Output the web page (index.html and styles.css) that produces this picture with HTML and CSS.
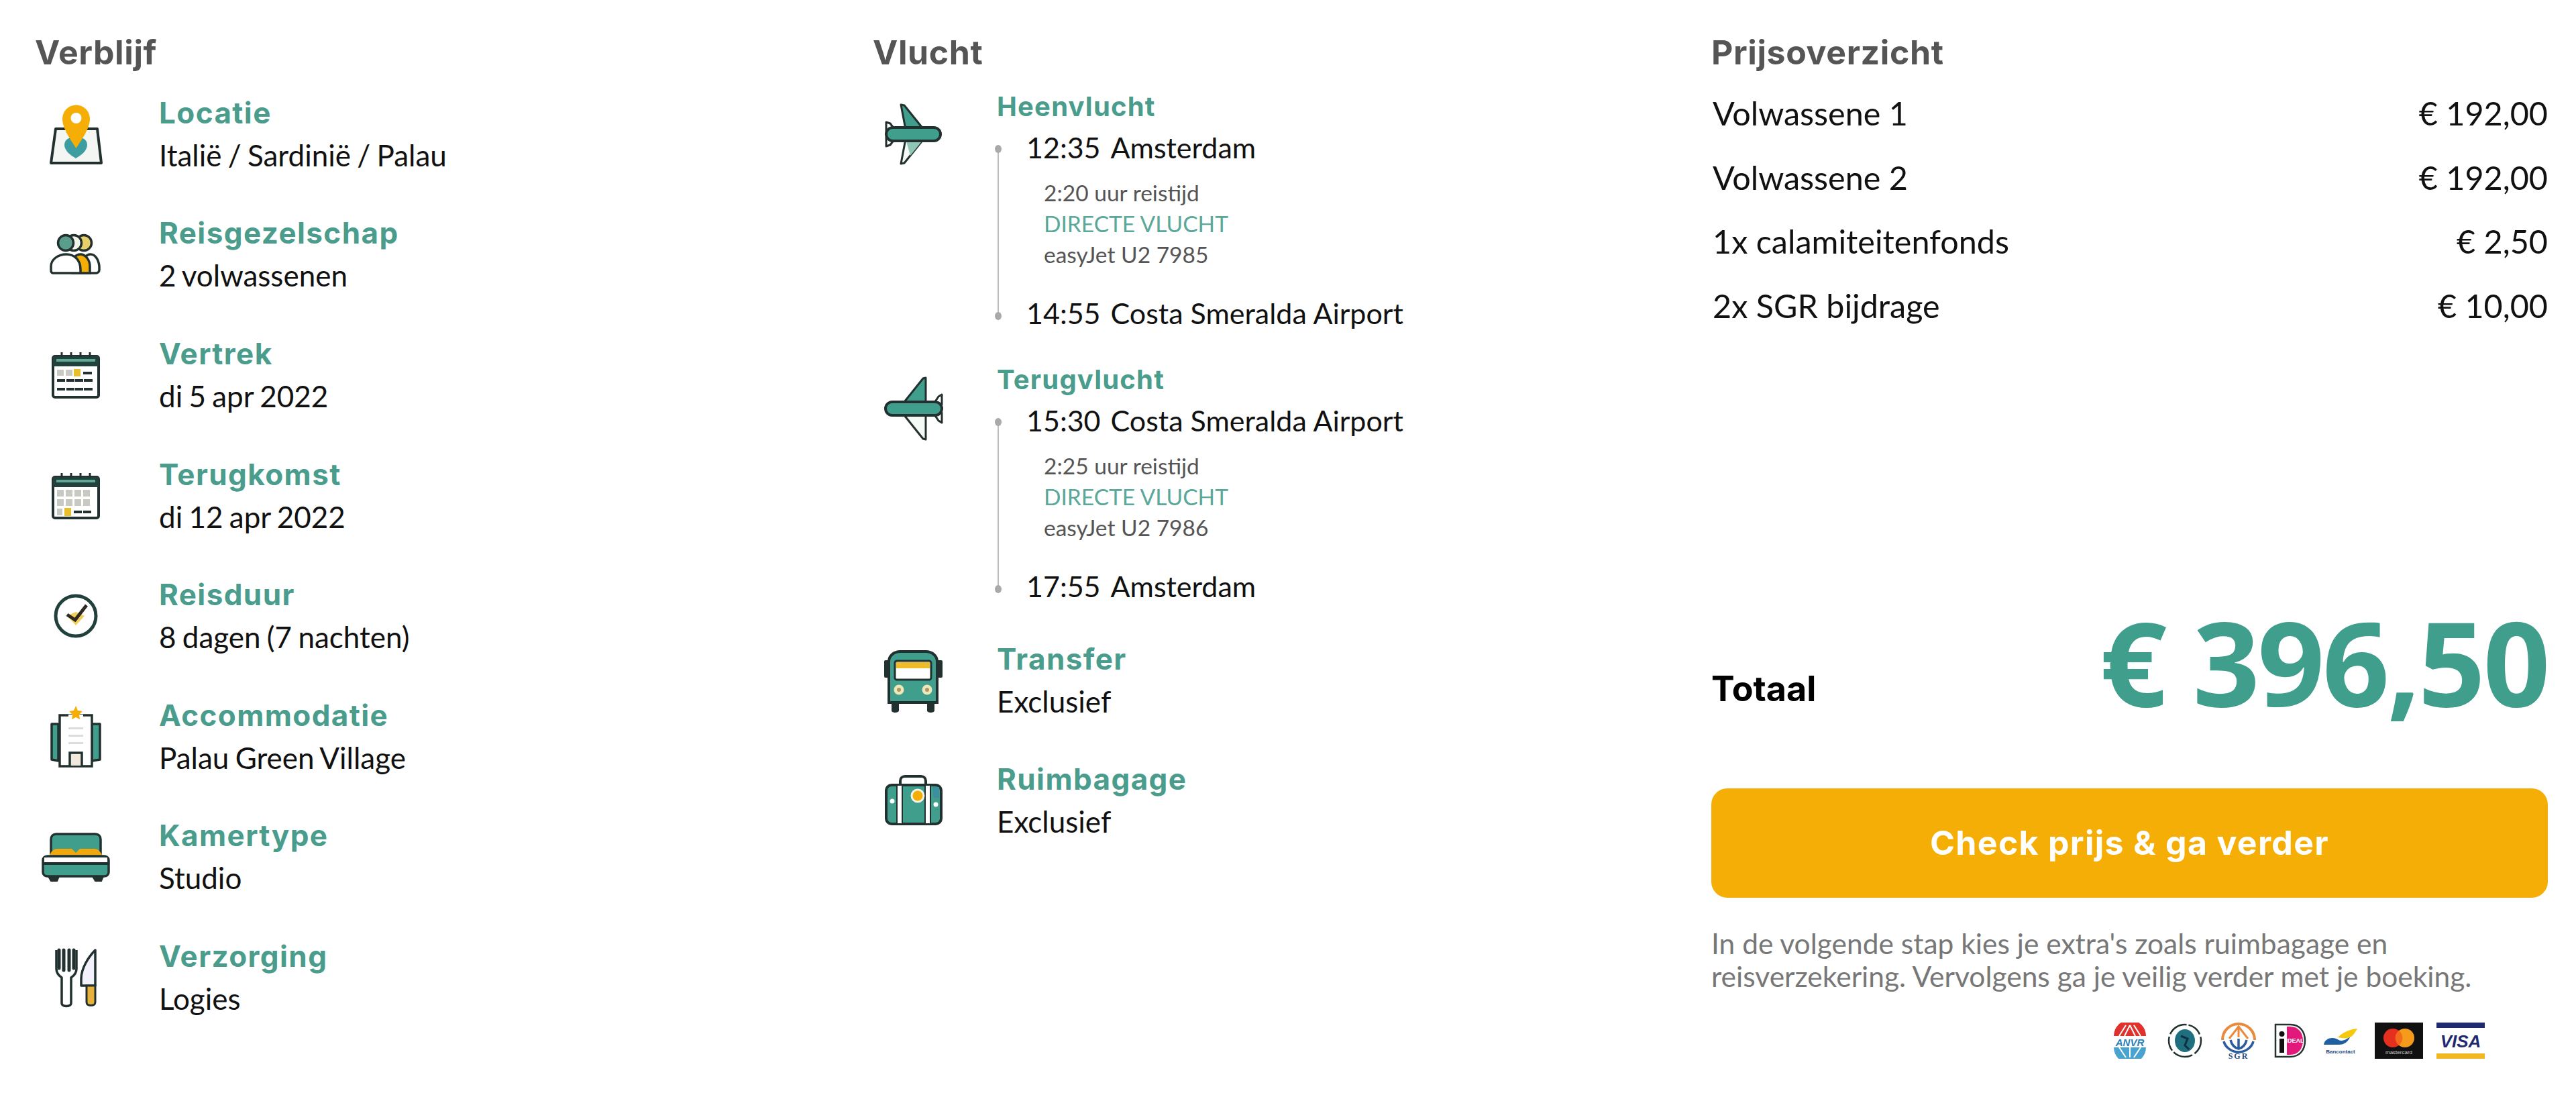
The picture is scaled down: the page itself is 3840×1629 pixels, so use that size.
FILE: index.html
```html
<!DOCTYPE html>
<html lang="nl">
<head>
<meta charset="utf-8">
<title>Boekingsoverzicht</title>
<link rel="stylesheet" href="styles.css">
</head>
<body>
<main class="page">

<section class="col">
  <h2 class="heading">Verblijf</h2>
  <div class="stack">
    <div class="item">
      <svg class="icon" viewBox="0 0 120 120"><path d="M31 52h62l6 51H24z" fill="#f4f6f4" stroke="#22302f" stroke-width="4" stroke-linejoin="round"/><path d="M44 76c0-8 7-12 17-12s17 4 17 12c0 9-10 16-17 20-7-4-17-11-17-20z" fill="#3d9da0"/><path d="M61.500 81C54 69 41 52 41 37a20.500 20.500 0 0 1 41 0c0 15-13 32-20.500 44z" fill="#f4ae05"/><circle cx="61.500" cy="36" r="8" fill="#fff"/></svg>
      <div><h3 class="label">Locatie</h3><p class="value">Italië / Sardinië / Palau</p></div>
    </div>
    <div class="item">
      <svg class="icon" viewBox="0 0 120 120"><g fill="#fff" stroke="#22302f" stroke-width="3.500"><ellipse cx="73" cy="43" rx="11.500" ry="11.500" fill="#e8cf6a"/><ellipse cx="58" cy="43" rx="11.500" ry="11.500" fill="#f3f3ea"/><ellipse cx="46" cy="43" rx="11.500" ry="11.500" fill="#5b9d8c"/><path d="M70 88V78c0-10 6-18 13-18s12 8 13 18v5c0 3-2 5-5 5z"/><path d="M56 88V74c0-8 5-14 12-14s14 8 14 18v10z" fill="#f4ae05"/><path d="M27 88c-2 0-3-2-3-5v-5c0-10 10-18 23-18 6 0 11 2 15 6 4 4 6 10 6 17v5z"/></g></svg>
      <div><h3 class="label">Reisgezelschap</h3><p class="value">2 volwassenen</p></div>
    </div>
    <div class="item">
      <svg class="icon" viewBox="0 0 120 120"><rect x="27" y="32" width="68" height="61" rx="3" fill="#fff" stroke="#22302f" stroke-width="4"/><rect x="27" y="32" width="68" height="15" fill="#22413d"/><rect x="32" y="36" width="58" height="4" fill="#5fa898"/><path d="M40 26v7M54 26v7M68 26v7M82 26v7" stroke="#22302f" stroke-width="3"/><g fill="#c9c9c4"><rect x="33" y="52" width="10" height="9"/><rect x="46" y="52" width="10" height="9"/></g><rect x="58" y="51" width="10" height="11" fill="#e8bf2a"/><g fill="#22302f"><rect x="72" y="55" width="13" height="4"/><rect x="33" y="66" width="12" height="4"/><rect x="47" y="66" width="12" height="4"/><rect x="60" y="66" width="12" height="4"/><rect x="73" y="66" width="13" height="4"/><rect x="33" y="79" width="12" height="4"/><rect x="47" y="79" width="12" height="4"/><rect x="60" y="79" width="12" height="4"/><rect x="73" y="79" width="13" height="4"/></g></svg>
      <div><h3 class="label">Vertrek</h3><p class="value">di 5 apr 2022</p></div>
    </div>
    <div class="item">
      <svg class="icon" viewBox="0 0 120 120"><rect x="27" y="32" width="68" height="61" rx="3" fill="#fff" stroke="#22302f" stroke-width="4"/><rect x="27" y="32" width="68" height="15" fill="#22413d"/><rect x="32" y="36" width="58" height="4" fill="#5fa898"/><path d="M40 26v7M54 26v7M68 26v7M82 26v7" stroke="#22302f" stroke-width="3"/><g fill="#c9c9c4"><rect x="33" y="51" width="10" height="10"/><rect x="46" y="51" width="10" height="10"/><rect x="59" y="51" width="10" height="10"/><rect x="72" y="51" width="10" height="10"/><rect x="33" y="65" width="10" height="10"/><rect x="46" y="65" width="10" height="10"/><rect x="59" y="65" width="10" height="10"/><rect x="72" y="65" width="10" height="10"/><rect x="33" y="79" width="8" height="10"/></g><rect x="44" y="78" width="10" height="12" fill="#e8bf2a"/><g fill="#22302f"><rect x="58" y="82" width="12" height="4"/><rect x="72" y="82" width="12" height="4"/></g></svg>
      <div><h3 class="label">Terugkomst</h3><p class="value">di 12 apr 2022</p></div>
    </div>
    <div class="item">
      <svg class="icon" viewBox="0 0 120 120"><circle cx="61" cy="60" r="30" fill="#fff" stroke="#22413d" stroke-width="5"/><path d="M48 60l13 14 13-14-13-6z" fill="#f0cf5a"/><path d="M48 58l12 8 17-22" fill="none" stroke="#2f2a1f" stroke-width="5"/></svg>
      <div><h3 class="label">Reisduur</h3><p class="value">8 dagen (7 nachten)</p></div>
    </div>
    <div class="item">
      <svg class="icon" viewBox="0 0 120 120"><path d="M25 41h10v55l-10-2zM85 41h12v53l-12 2z" fill="#3f9e8c" stroke="#22302f" stroke-width="3.500" stroke-linejoin="round"/><path d="M37 28h48v76H37z" fill="#fff" stroke="#22302f" stroke-width="3.500"/><path d="M50 27h22v6H50z" fill="#fff"/><path d="M61 14l3 7 7 1-5 5 1 7-6-3-6 3 1-7-5-5 7-1z" fill="#f4ae05"/><g fill="#dcdcd8"><rect x="50" y="46" width="22" height="3"/><rect x="50" y="57" width="22" height="3"/><rect x="50" y="68" width="22" height="3"/></g><path d="M52 103V84h18v19" fill="#f0e9dc" stroke="#22302f" stroke-width="3.500"/></svg>
      <div><h3 class="label">Accommodatie</h3><p class="value">Palau Green Village</p></div>
    </div>
    <div class="item">
      <svg class="icon" viewBox="0 0 120 120"><path d="M24 56V34c0-5 3-8 8-8h58c5 0 8 3 8 8v22z" fill="#3f9e8c" stroke="#22302f" stroke-width="3.500"/><path d="M21 60c2-6 6-12 12-12h22l6 6 6-6h22c6 0 10 6 12 12z" fill="#f0a80c"/><path d="M12 65c0-4 3-6 7-6h84c4 0 7 2 7 6v18c0 4-3 6-7 6H19c-4 0-7-2-7-6z" fill="#3f9e8c" stroke="#22302f" stroke-width="3.500"/><rect x="14" y="61" width="94" height="7" fill="#fff"/><rect x="13" y="68" width="96" height="4" fill="#22302f"/><path d="M20 89h16l-3 7H24zM86 89h16l-3 7h-9z" fill="#22302f" stroke="#22302f" stroke-width="2" stroke-linejoin="round"/></svg>
      <div><h3 class="label">Kamertype</h3><p class="value">Studio</p></div>
    </div>
    <div class="item">
      <svg class="icon" viewBox="0 0 120 120"><path d="M32 19v28c0 7 5 11 8 13v38c0 6 14 6 14 0V60c3-2 8-6 8-13V19" fill="#fff" stroke="#22302f" stroke-width="3.500" stroke-linejoin="round"/><path d="M36 19v27M43 19v30M51 19v30M58 19v27" stroke="#22302f" stroke-width="5" stroke-linecap="round"/><path d="M90 19v53H69V62c0-16 11-33 21-43z" fill="#f3f1fb" stroke="#22302f" stroke-width="3.500" stroke-linejoin="round"/><path d="M77 72h13v25c0 6-13 6-13 0z" fill="#e8b23a" stroke="#22302f" stroke-width="3"/></svg>
      <div><h3 class="label">Verzorging</h3><p class="value">Logies</p></div>
    </div>
  </div>
</section>

<section class="col">
  <h2 class="heading">Vlucht</h2>
  <div class="flight">
    <svg class="icon" viewBox="0 0 120 120"><path d="M42 16l5 1 29 36H49z" fill="#3f9e8c" stroke="#22302f" stroke-width="3" stroke-linejoin="round"/><path d="M42 104l5-1 29-36H49z" fill="#f5faf7" stroke="#22302f" stroke-width="3" stroke-linejoin="round"/><path d="M49 67h27L56 92z" fill="#8fc6b6"/><path d="M20 42l6 2 9 12H20zM20 78l6-2 9-12H20z" fill="#fff" stroke="#22302f" stroke-width="3" stroke-linejoin="round"/><rect x="20" y="50" width="81" height="20" rx="10" fill="#3f9e8c" stroke="#22302f" stroke-width="4"/></svg>
    <div class="flight-body">
      <h3 class="label label-small">Heenvlucht</h3>
      <div class="leg">
        <p class="stop"><span class="stop-time">12:35</span>Amsterdam</p>
        <div class="leg-info"><p>2:20 uur reistijd</p><p class="direct">DIRECTE VLUCHT</p><p>easyJet U2 7985</p></div>
        <p class="stop"><span class="stop-time">14:55</span>Costa Smeralda Airport</p>
      </div>
    </div>
  </div>
  <div class="flight flight-back">
    <svg class="icon" viewBox="0 0 120 120"><path d="M79 14l-4 1-28 35h32z" fill="#3f9e8c" stroke="#22302f" stroke-width="3" stroke-linejoin="round"/><path d="M79 106l-4-1-28-35h32z" fill="#f5faf7" stroke="#22302f" stroke-width="3" stroke-linejoin="round"/><path d="M103 39l-5 3-8 12h13zM103 81l-5-3-8-12h13z" fill="#fff" stroke="#22302f" stroke-width="3" stroke-linejoin="round"/><rect x="19" y="50" width="84" height="20" rx="10" fill="#3f9e8c" stroke="#22302f" stroke-width="4"/></svg>
    <div class="flight-body">
      <h3 class="label label-small">Terugvlucht</h3>
      <div class="leg">
        <p class="stop"><span class="stop-time">15:30</span>Costa Smeralda Airport</p>
        <div class="leg-info"><p>2:25 uur reistijd</p><p class="direct">DIRECTE VLUCHT</p><p>easyJet U2 7986</p></div>
        <p class="stop"><span class="stop-time">17:55</span>Amsterdam</p>
      </div>
    </div>
  </div>
  <div class="extras">
    <div class="item">
      <svg class="icon" viewBox="0 0 120 120"><rect x="17" y="30" width="9" height="26" rx="2" fill="#22302f"/><rect x="95" y="30" width="9" height="26" rx="2" fill="#22302f"/><path d="M24 93V32c0-9 8-15 17-15h38c9 0 17 6 17 15v61z" fill="#3f9e8c" stroke="#22302f" stroke-width="4"/><rect x="33" y="31" width="54" height="28" rx="3" fill="#fff" stroke="#22302f" stroke-width="3"/><rect x="35" y="33" width="50" height="9" fill="#eebb2a"/><circle cx="39" cy="74" r="7.500" fill="#f0e6b8"/><circle cx="81" cy="74" r="7.500" fill="#f0e6b8"/><circle cx="39" cy="74" r="3" fill="#a89a6a"/><circle cx="81" cy="74" r="3" fill="#a89a6a"/><path d="M28 93h11v12c0 4-11 4-11 0zM81 93h11v12c0 4-11 4-11 0z" fill="#22302f"/></svg>
      <div><h3 class="label">Transfer</h3><p class="value">Exclusief</p></div>
    </div>
    <div class="item">
      <svg class="icon" viewBox="0 0 120 120"><path d="M41 39v-8c0-4 3-7 7-7h24c4 0 7 3 7 7v8" fill="#fff" stroke="#22302f" stroke-width="4"/><rect x="20" y="37" width="82" height="58" rx="8" fill="#3f9e8c" stroke="#22302f" stroke-width="4"/><rect x="36" y="37" width="8" height="58" fill="#fff" stroke="#22302f" stroke-width="2"/><rect x="78" y="37" width="8" height="58" fill="#fff" stroke="#22302f" stroke-width="2"/><circle cx="67" cy="53" r="9" fill="#f4ae05" stroke="#f3f3e6" stroke-width="3"/><rect x="90" y="40" width="9" height="16" fill="#3d8fa0"/><circle cx="94" cy="66" r="3.500" fill="#fff"/><circle cx="29" cy="61" r="3.500" fill="#fff"/></svg>
      <div><h3 class="label">Ruimbagage</h3><p class="value">Exclusief</p></div>
    </div>
  </div>
</section>

<section class="col col-price">
  <h2 class="heading">Prijsoverzicht</h2>
  <ul class="prices">
    <li class="price"><span>Volwassene 1</span><span>€ 192,00</span></li>
    <li class="price"><span>Volwassene 2</span><span>€ 192,00</span></li>
    <li class="price"><span>1x calamiteitenfonds</span><span>€ 2,50</span></li>
    <li class="price"><span>2x SGR bijdrage</span><span>€ 10,00</span></li>
  </ul>
  <div class="total"><span class="total-label">Totaal</span><span class="total-amount">€ 396,50</span></div>
  <a class="cta">Check prijs &amp; ga verder</a>
  <p class="note">In de volgende stap kies je extra's zoals ruimbagage en reisverzekering. Vervolgens ga je veilig verder met je boeking.</p>
  <div class="logos">
    <svg class="logo logo-anvr" viewBox="0 0 60 54"><path d="M6 20a24 24 0 0 1 48 0z" fill="#e0322c"/><path d="M14 20L24 4M46 20L36 4M22 20L30 4M38 20L30 4" stroke="#fff" stroke-width="2"/><path d="M6 37a24 24 0 0 0 48 0z" fill="#4aa3cf"/><path d="M14 37l10 15M46 37L36 52M30 37v15" stroke="#fff" stroke-width="2"/><text x="30" y="35" class="logo-text logo-text-anvr">ANVR</text></svg>
    <svg class="logo logo-seal" viewBox="0 0 54 54"><circle cx="27" cy="27" r="24" fill="#fff" stroke="#22302f" stroke-width="2.500" stroke-dasharray="22 4 30 3"/><ellipse cx="27" cy="27" rx="15" ry="17" fill="#1f6f7f"/><path d="M21 20l10 4-4 10 6 6" stroke="#0e3040" stroke-width="3" fill="none"/></svg>
    <svg class="logo logo-sgr" viewBox="0 0 56 54"><path d="M4 26a24 24 0 0 1 48 0" fill="none" stroke="#e98a3c" stroke-width="4"/><path d="M14 24l14-18 14 18M28 6v16" fill="none" stroke="#e98a3c" stroke-width="3"/><path d="M6 28c2 9 12 16 22 16s20-7 22-16M16 26c2 8 7 12 12 13 5-1 10-5 12-13M28 24v15" fill="none" stroke="#2a5ba0" stroke-width="3.500"/><text x="28" y="54" class="logo-text logo-text-sgr">SGR</text></svg>
    <svg class="logo logo-ideal" viewBox="0 0 48 54"><path d="M2 3h22c14 0 22 10 22 24s-8 24-22 24H2z" fill="#fff" stroke="#22302f" stroke-width="2.500"/><path d="M19 6h5c12 0 19 9 19 21s-7 21-19 21h-5z" fill="#e2187b"/><rect x="8" y="24" width="7" height="21" fill="#111"/><circle cx="11.500" cy="17" r="4" fill="#111"/><text x="31" y="30" class="logo-text logo-text-ideal">IDEAL</text></svg>
    <svg class="logo logo-banc" viewBox="0 0 52 54"><path d="M22 22c8-8 18-12 29-13-3 5-5 9-9 12-5 3-12 3-20 1z" fill="#f6c90e"/><path d="M1 33c1-7 7-10 13-10 7 0 9 4 13 4 6 0 9-4 13-5-3 6-7 11-17 11H6c-3 0-5 0-5 0z" fill="#1d5fa0"/><text x="26" y="46" class="logo-text logo-text-banc">Bancontact</text></svg>
    <svg class="logo logo-mc" viewBox="0 0 72 54"><rect width="72" height="54" fill="#111"/><circle cx="27" cy="23" r="14" fill="#e5301f"/><circle cx="45" cy="23" r="14" fill="#f59a1a"/><path d="M36 12a14 14 0 0 1 0 22 14 14 0 0 1 0-22z" fill="#f46a1c"/><text x="36" y="47" class="logo-text logo-text-mc">mastercard</text></svg>
    <svg class="logo logo-visa" viewBox="0 0 72 54"><rect width="72" height="8" fill="#1f2a6f"/><rect y="46" width="72" height="8" fill="#f2b824"/><text x="36" y="37" class="logo-text logo-text-visa">VISA</text></svg>
  </div>
</section>

</main>
</body>
</html>
```
FILE: styles.css
```css
* { box-sizing: border-box; }
html, body { margin: 0; padding: 0; background: #fff; }
body { font-family: "Lato", "Liberation Sans", sans-serif; color: #111; }
h2, h3, p, ul { margin: 0; padding: 0; list-style: none; }

.page {
  display: grid;
  grid-template-columns: 1249px 1250px 1247px;
  padding: 48px 42px 0 52px;
  height: 1629px;
}

.heading {
  font-family: "Inter", "Liberation Sans", sans-serif;
  font-weight: 700;
  font-size: 50px;
  line-height: 60px;
  letter-spacing: 0.6px;
  color: #555556;
}

.stack { margin-top: 2px; }

.item { display: flex; align-items: center; height: 179.6px; }
.extras .item { height: 179px; }
.icon { width: 120px; height: 120px; flex: none; margin-right: 65px; display: block; }

.label {
  font-family: "Inter", "Liberation Sans", sans-serif;
  font-weight: 700;
  font-size: 44px;
  line-height: 62px;
  letter-spacing: 1.4px;
  color: #4a9d8c;
}
.value { font-size: 44px; line-height: 64px; word-spacing: -2px; color: #111; }

.flight { display: flex; align-items: flex-start; margin-top: 26px; }
.flight-back { margin-top: 43px; }
.flight .icon { margin-top: 6px; }
.flight-back .icon { margin-top: 8px; }
.label-small { font-size: 40px; line-height: 50px; letter-spacing: 1.2px; }

.leg { position: relative; margin-top: 5px; padding-left: 44px; }
.leg::before {
  content: "";
  position: absolute;
  left: 1px;
  top: 36px;
  bottom: 28px;
  width: 2px;
  background: #bdbdbd;
}
.leg::after {
  content: "";
  position: absolute;
  left: -3px;
  bottom: 21px;
  width: 10px;
  height: 12px;
  border-radius: 50%;
  background: #a9a9a9;
  box-shadow: 0 -249px 0 #a9a9a9;
}
.stop { font-size: 43px; line-height: 62px; color: #111; }
.stop-time { margin-right: 15px; }
.leg-info { margin: 13px 0 34px 26px; font-size: 33.5px; line-height: 46px; color: #555; }
.direct { color: #5aa899; }

.extras { margin-top: 19px; }

.prices { margin-top: 12px; }
.price {
  display: flex;
  justify-content: space-between;
  height: 95.7px;
  align-items: center;
  padding-left: 2px;
  font-size: 48.500px;
  color: #111;
}

.total {
  display: flex;
  justify-content: space-between;
  align-items: flex-end;
  margin-top: 382px;
  height: 200px;
}
.total-label {
  font-family: "Inter", "Liberation Sans", sans-serif;
  font-weight: 700;
  font-size: 52px;
  line-height: 60px;
  margin-bottom: 28px;
  color: #000;
}
.total-amount {
  font-family: "Open Sans", "Liberation Sans", sans-serif;
  font-weight: 700;
  font-size: 175px;
  line-height: 200px;
  letter-spacing: -3.500px;
  color: #3f9e8c;
}

.cta {
  display: flex;
  align-items: center;
  justify-content: center;
  height: 163px;
  margin-top: 90px;
  border-radius: 24px;
  background: #f5ae05;
  color: #fff;
  font-family: "Inter", "Liberation Sans", sans-serif;
  font-weight: 700;
  font-size: 50px;
  letter-spacing: 1.3px;
}

.note {
  margin-top: 43px;
  font-size: 42.500px;
  line-height: 49px;
  color: #777;
  max-width: 1200px;
}

.logos {
  display: flex;
  justify-content: flex-end;
  align-items: center;
  margin-top: 45px;
  padding-right: 94px;
  height: 54px;
  gap: 25px;
}
.logo { height: 54px; display: block; flex: none; }
.logo-anvr { width: 60px; }
.logo-seal { width: 54px; }
.logo-sgr { width: 56px; }
.logo-ideal { width: 48px; }
.logo-banc { width: 52px; }
.logo-mc { width: 72px; }
.logo-visa { width: 72px; margin-left: -5px; }

.logo-text { text-anchor: middle; font-family: "Liberation Sans", sans-serif; font-weight: 700; }
.logo-text-anvr { font-size: 15px; fill: #2a7fb8; font-style: italic; }
.logo-text-sgr { font-size: 12px; fill: #2a4a80; letter-spacing: 2px; font-family: "Liberation Serif", serif; }
.logo-text-ideal { font-size: 9px; fill: #fff; }
.logo-text-banc { font-size: 8px; fill: #2a4a80; }
.logo-text-mc { font-size: 8px; fill: #ccc; font-weight: 400; }
.logo-text-visa { font-size: 26px; fill: #1f2a6f; font-style: italic; }
```
